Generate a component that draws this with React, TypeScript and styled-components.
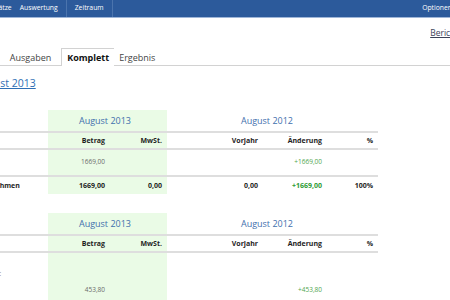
import React from "react";
import styled, { createGlobalStyle } from "styled-components";

const Global = createGlobalStyle`
  html, body { margin: 0; padding: 0; background: #ffffff; overflow: hidden; }
  body { font-family: "Open Sans", "Noto Sans", Arial, sans-serif; }
`;

const COLS = "108px 62px 57px 96px 64px 51px";

const Viewport = styled.div`
  width: 450px;
  height: 300px;
  overflow: hidden;
  position: relative;
`;

const Page = styled.div`
  width: 560px;
  margin-left: -60px;
  font-family: "Open Sans", "Noto Sans", Arial, sans-serif;
`;

const TopBar = styled.div`
  display: flex;
  align-items: stretch;
  height: 17px;
  background: #2c5a9b;
  border-bottom: 1px solid #9fb6d8;
  padding-left: 40px;
  padding-right: 44px;
`;

const BarItem = styled.div<{ $push?: boolean }>`
  display: flex;
  align-items: center;
  padding: 0 4px;
  color: #ffffff;
  font-size: 6.8px;
  line-height: 1;
  margin-left: ${(p) => (p.$push ? "auto" : "0")};
`;

const BarSep = styled.div`
  width: 1px;
  margin: 0 4px;
  background: #4b74ad;
`;

const LinkRow = styled.div`
  display: flex;
  justify-content: flex-end;
  height: 30px;
  padding-top: 9px;
  box-sizing: border-box;
  padding-right: 7px;
`;

const ReportLink = styled.a`
  font-size: 8.5px;
  line-height: 12px;
  color: #3c4258;
  text-decoration: underline;
`;

const TabBar = styled.div`
  display: flex;
  align-items: flex-end;
  height: 17px;
  border-bottom: 1px solid #d2d2d2;
  padding-left: 7px;
`;

const Tab = styled.div<{ $active?: boolean }>`
  box-sizing: border-box;
  display: flex;
  align-items: center;
  padding: ${(p) => (p.$active ? "0 5px" : "0 4px")};
  font-size: 9px;
  line-height: 1;
  color: ${(p) => (p.$active ? "#111111" : "#444444")};
  font-weight: ${(p) => (p.$active ? 700 : 400)};
  border: 1px solid ${(p) => (p.$active ? "#d2d2d2" : "transparent")};
  border-bottom: none;
  background: #ffffff;
  margin: ${(p) => (p.$active ? "0 -1px -1px 5px" : "0")};
  height: ${(p) => (p.$active ? "18px" : "17px")};
`;

const Title = styled.a`
  display: inline-block;
  margin: 10px 0 0 35px;
  font-size: 10.5px;
  line-height: 14px;
  color: #2f6fb5;
  text-decoration: underline;
`;

const Table = styled.div<{ $top: number }>`
  width: 438px;
  margin-top: ${(p) => p.$top}px;
`;

const Row = styled.div<{ $h: number; $line?: boolean }>`
  display: grid;
  grid-template-columns: ${COLS};
  height: ${(p) => p.$h}px;
  border-bottom: ${(p) => (p.$line ? "2px solid #dedede" : "0")};
`;

const Cell = styled.div<{
  $green?: boolean;
  $span?: number;
  $align?: "left" | "right" | "center";
  $valign?: "center" | "end";
  $pr?: number;
}>`
  grid-column: span ${(p) => p.$span ?? 1};
  background: ${(p) => (p.$green ? "#eafbe6" : "transparent")};
  display: flex;
  align-items: ${(p) => (p.$valign === "end" ? "flex-end" : "center")};
  justify-content: ${(p) =>
    p.$align === "left" ? "flex-start" : p.$align === "center" ? "center" : "flex-end"};
  padding: ${(p) =>
    p.$align === "left" ? "0 0 0 12px" : `0 ${p.$pr ?? 5}px 0 0`};
  padding-bottom: ${(p) => (p.$valign === "end" ? "3px" : "0")};
`;

const Period = styled.span`
  font-size: 9px;
  line-height: 1;
  color: #3f70ad;
`;

type Tone = "head" | "muted" | "bold" | "gain" | "gainBold" | "label";

const toneColor: Record<Tone, string> = {
  head: "#1e1e1e",
  muted: "#6b6b6b",
  bold: "#1e1e1e",
  gain: "#4fa64f",
  gainBold: "#2e9a35",
  label: "#8a8a8a",
};

const Val = styled.span<{ $tone: Tone }>`
  font-size: ${(p) => (p.$tone === "muted" || p.$tone === "gain" || p.$tone === "label" ? "6.5px" : "7px")};
  line-height: 1;
  font-weight: ${(p) => (p.$tone === "head" || p.$tone === "bold" || p.$tone === "gainBold" ? 700 : 400)};
  color: ${(p) => toneColor[p.$tone]};
  white-space: nowrap;
`;

function PeriodRow() {
  return (
    <Row $h={21} $line>
      <Cell />
      <Cell $green $span={2} $align="center">
        <Period>August 2013</Period>
      </Cell>
      <Cell $span={3} $align="center" $pr={11}>
        <Period>August 2012</Period>
      </Cell>
    </Row>
  );
}

function ColumnRow() {
  return (
    <Row $h={15} $line>
      <Cell />
      <Cell $green>
        <Val $tone="head">Betrag</Val>
      </Cell>
      <Cell $green>
        <Val $tone="head">MwSt.</Val>
      </Cell>
      <Cell>
        <Val $tone="head">Vorjahr</Val>
      </Cell>
      <Cell>
        <Val $tone="head">Änderung</Val>
      </Cell>
      <Cell>
        <Val $tone="head">%</Val>
      </Cell>
    </Row>
  );
}

export default function App() {
  return (
    <Viewport>
      <Global />
      <Page>
        <TopBar>
          <BarItem>Umsätze</BarItem>
          <BarItem>Auswertung</BarItem>
          <BarSep />
          <BarItem>Zeitraum</BarItem>
          <BarSep />
          <BarItem $push>Optionen</BarItem>
        </TopBar>
        <LinkRow>
          <ReportLink href="#">Bericht drucken</ReportLink>
        </LinkRow>
        <TabBar>
          <Tab>Einnahmen</Tab>
          <Tab>Ausgaben</Tab>
          <Tab $active>Komplett</Tab>
          <Tab>Ergebnis</Tab>
        </TabBar>
        <Title href="#">August 2013</Title>

        <Table $top={18}>
          <PeriodRow />
          <ColumnRow />
          <Row $h={25} $line>
            <Cell $align="left">
              <Val $tone="muted"></Val>
            </Cell>
            <Cell $green>
              <Val $tone="muted">1669,00</Val>
            </Cell>
            <Cell $green />
            <Cell />
            <Cell>
              <Val $tone="gain">+1669,00</Val>
            </Cell>
            <Cell />
          </Row>
          <Row $h={17}>
            <Cell $align="left">
              <Val $tone="bold">Summe Einnahmen</Val>
            </Cell>
            <Cell $green>
              <Val $tone="bold">1669,00</Val>
            </Cell>
            <Cell $green>
              <Val $tone="bold">0,00</Val>
            </Cell>
            <Cell>
              <Val $tone="bold">0,00</Val>
            </Cell>
            <Cell>
              <Val $tone="gainBold">+1669,00</Val>
            </Cell>
            <Cell>
              <Val $tone="bold">100%</Val>
            </Cell>
          </Row>
        </Table>

        <Table $top={19}>
          <PeriodRow />
          <ColumnRow />
          <Row $h={27}>
            <Cell $align="left" $valign="end">
              <Val $tone="label">Materialeinkauf:</Val>
            </Cell>
            <Cell $green $span={2} />
            <Cell $span={3} />
          </Row>
          <Row $h={20}>
            <Cell />
            <Cell $green>
              <Val $tone="muted">453,80</Val>
            </Cell>
            <Cell $green />
            <Cell />
            <Cell>
              <Val $tone="gain">+453,80</Val>
            </Cell>
            <Cell />
          </Row>
        </Table>
      </Page>
    </Viewport>
  );
}
